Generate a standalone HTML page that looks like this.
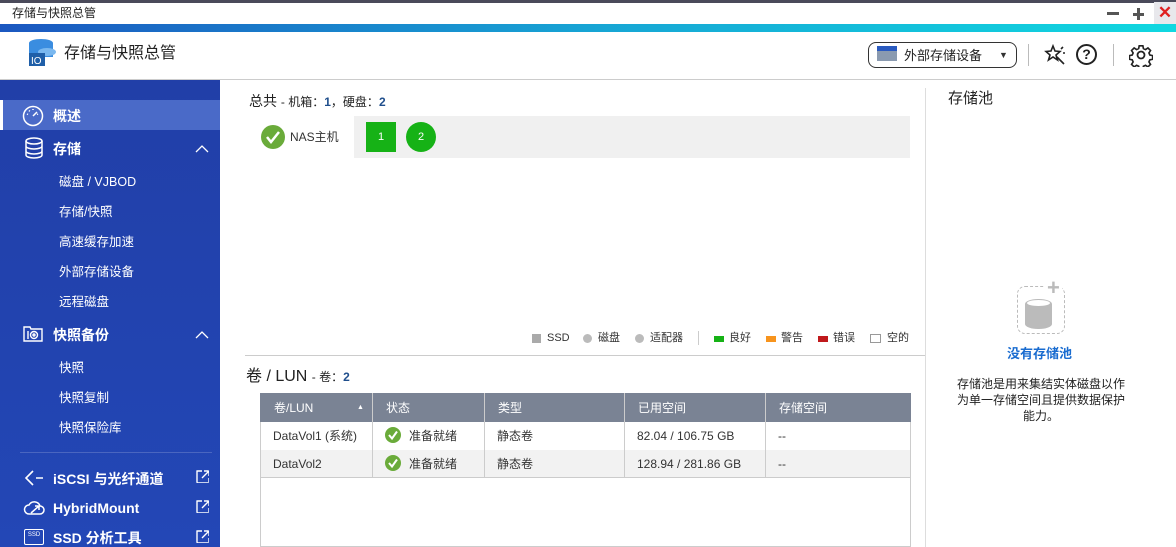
<html><head><style>
*{margin:0;padding:0;box-sizing:border-box}
body{width:1176px;height:547px;overflow:hidden;font-family:"Liberation Sans","Noto Sans CJK SC",sans-serif;background:#fff;position:relative;font-size:12px;color:#333;line-height:1.2}
.a{position:absolute;white-space:nowrap}
.sb{left:0;top:80px;width:220px;height:467px;background:linear-gradient(#213fa8,#2347b6);color:#fff}
.sb .it{position:absolute;font-size:14px;font-weight:bold;line-height:16px}
.sb .sub{position:absolute;left:59px;font-size:12.5px;line-height:14px}
.hd{background:#7a8394;color:#fff}
.lg{position:absolute;top:332px;font-size:11px;line-height:13px;color:#333}
.ck{position:absolute;width:16px;height:16px;border-radius:50%;background:#6aab3a}
.ext{position:absolute;left:196px;width:13px;height:13px;border:1.5px solid #fff;border-radius:1px}
</style></head><body>
<div class="a" style="left:0;top:0;width:1176px;height:3px;background:#4a4a5a"></div>
<div class="a" style="left:12px;top:6px;font-size:12px;color:#222;line-height:14px">存储与快照总管</div>
<div class="a" style="left:1107px;top:12px;width:12px;height:3px;background:#555"></div>
<div class="a" style="left:1133px;top:13px;width:11px;height:3px;background:#555"></div>
<div class="a" style="left:1137px;top:8px;width:3px;height:12px;background:#555"></div>
<div class="a" style="left:1154px;top:2px;width:22px;height:22px;background:#e8e8ec;color:#e02020;font-size:17px;text-align:center;font-weight:bold;line-height:22px">✕</div>
<div class="a" style="left:0;top:24px;width:1176px;height:8px;background:linear-gradient(90deg,#1b57c0,#17a4d4 50%,#10d8e0)"></div>
<svg class="a" style="left:27px;top:38px" width="32" height="30"><ellipse cx="14" cy="5" rx="12" ry="4" fill="#3a8de0"/><rect x="2" y="5" width="24" height="14" fill="#3a8de0"/><ellipse cx="20" cy="14" rx="9" ry="4" fill="#7ab8ef"/><rect x="2" y="15" width="16" height="13" fill="#1f5fa8"/><text x="4" y="26" font-size="10" fill="#fff" font-family="Liberation Sans">IO</text></svg>
<div class="a" style="left:64px;top:44px;font-size:16px;color:#222;line-height:20px">存储与快照总管</div>
<div class="a" style="left:868px;top:42px;width:149px;height:26px;border:1.5px solid #333;border-radius:8px"></div>
<div class="a" style="left:877px;top:46px;width:20px;height:15px;background:#8a9ab0;border-top:5px solid #2a5ac0"></div>
<div class="a" style="left:904px;top:48px;font-size:13px;color:#222;line-height:16px">外部存储设备</div>
<div class="a" style="left:999px;top:50px;font-size:9px;color:#333">▼</div>
<div class="a" style="left:1028px;top:44px;width:1px;height:22px;background:#bbb"></div>
<svg class="a" style="left:1044px;top:44px" width="22" height="22" fill="none" stroke="#222" stroke-width="1.6"><path d="M9 2l2 5 5 .5-4 3.5 1.5 5-4.5-3-4.5 3 1.5-5-4-3.5 5-.5z"/><path d="M13 13l7 7M17 5l2-2M19 9h2"/></svg>
<div class="a" style="left:1076px;top:44px;width:21px;height:21px;border:2px solid #222;border-radius:50%;text-align:center;font-weight:bold;font-size:14px;line-height:17px;color:#222">?</div>
<div class="a" style="left:1113px;top:44px;width:1px;height:22px;background:#bbb"></div>
<svg class="a" style="left:1129px;top:43px" width="24" height="24" fill="none" stroke="#222" stroke-width="1.8"><circle cx="12" cy="12" r="3.5"/><path d="M10 2h4l.6 3 2.3 1 2.6-1.7 2.8 2.8-1.7 2.6 1 2.3 3 .6v4l-3 .6-1 2.3 1.7 2.6-2.8 2.8-2.6-1.7-2.3 1-.6 3h-4l-.6-3-2.3-1-2.6 1.7-2.8-2.8 1.7-2.6-1-2.3-3-.6v-4l3-.6 1-2.3-1.7-2.6 2.8-2.8 2.6 1.7 2.3-1z" transform="translate(1 1) scale(.92)"/></svg>
<div class="a" style="left:0;top:79px;width:1176px;height:1px;background:#ccc"></div>
<div class="a sb">
<div class="a" style="left:0;top:20px;width:220px;height:30px;background:#4a6ac8"></div>
<div class="a" style="left:0;top:20px;width:3px;height:30px;background:#fff"></div>
<div class="it" style="top:28px;left:53px">概述</div>
<svg class="a" style="left:22px;top:25px" width="22" height="22" fill="none" stroke="#fff" stroke-width="1.5"><circle cx="11" cy="11" r="9.5"/><path d="M11 11l4-4M5 9l1 .5M7 5.5l.8.8M11 4v1M16 9l-1 .5"/></svg>
<div class="it" style="top:61px;left:53px">存储</div>
<svg class="a" style="left:24px;top:57px" width="20" height="22" fill="none" stroke="#fff" stroke-width="1.5"><ellipse cx="10" cy="4" rx="8" ry="3"/><path d="M2 4v14c0 1.7 3.6 3 8 3s8-1.3 8-3V4M2 9c0 1.7 3.6 3 8 3s8-1.3 8-3M2 14c0 1.7 3.6 3 8 3s8-1.3 8-3"/></svg>
<svg class="a" style="left:195px;top:64px" width="14" height="9" fill="none" stroke="#fff" stroke-width="1.3"><path d="M1 8l6-6 6 6"/></svg>
<div class="sub" style="top:95px">磁盘 / VJBOD</div>
<div class="sub" style="top:125px">存储/快照</div>
<div class="sub" style="top:155px">高速缓存加速</div>
<div class="sub" style="top:185px">外部存储设备</div>
<div class="sub" style="top:215px">远程磁盘</div>
<svg class="a" style="left:23px;top:246px" width="20" height="16" fill="none" stroke="#fff" stroke-width="1.4"><path d="M1 1h6l1 2h11v12H1z"/><circle cx="11" cy="9" r="3.5"/><circle cx="11" cy="9" r="1"/><path d="M5 5v8"/></svg>
<div class="it" style="top:247px;left:53px">快照备份</div>
<svg class="a" style="left:195px;top:250px" width="14" height="9" fill="none" stroke="#fff" stroke-width="1.3"><path d="M1 8l6-6 6 6"/></svg>
<div class="sub" style="top:281px">快照</div>
<div class="sub" style="top:311px">快照复制</div>
<div class="sub" style="top:341px">快照保险库</div>
<div class="a" style="left:20px;top:372px;width:192px;height:1px;background:#4a66c0"></div>
<div class="it" style="top:391px;left:53px">iSCSI 与光纤通道</div>
<div class="it" style="top:420px;left:53px">HybridMount</div>
<div class="it" style="top:450px;left:53px">SSD 分析工具</div>
<svg class="a" style="left:24px;top:390px" width="20" height="16" fill="none" stroke="#fff" stroke-width="1.6"><path d="M9 1L2 8l7 7M12 8h7"/></svg>
<svg class="a" style="left:23px;top:420px" width="22" height="16" fill="none" stroke="#fff" stroke-width="1.5"><path d="M6 14h11a4 4 0 000-8 6 6 0 00-11-1 4.5 4.5 0 000 9z"/><path d="M8 13l8-7M12 6h4v4"/></svg>
<div class="a" style="left:24px;top:449px;width:20px;height:16px;border:1.5px solid #fff;border-radius:2px;font-size:6px;text-align:center;line-height:11px">SSD</div>
<svg class="ext" style="top:390px;border:none" width="14" height="14" fill="none" stroke="#fff" stroke-width="1.4"><path d="M6 1H1v12h12V8M8 1h5v5M13 1L6 8"/></svg>
<svg class="ext" style="top:420px;border:none" width="14" height="14" fill="none" stroke="#fff" stroke-width="1.4"><path d="M6 1H1v12h12V8M8 1h5v5M13 1L6 8"/></svg>
<svg class="ext" style="top:450px;border:none" width="14" height="14" fill="none" stroke="#fff" stroke-width="1.4"><path d="M6 1H1v12h12V8M8 1h5v5M13 1L6 8"/></svg>
</div>
<div class="a" style="left:249px;top:92px;font-size:14px;color:#222;line-height:18px">总共 <span style="font-size:12px">- 机箱：<b style="color:#1f4e8c">1</b>，硬盘：<b style="color:#1f4e8c">2</b></span></div>
<svg class="a" style="left:261px;top:125px" width="24" height="24"><circle cx="12" cy="12" r="12" fill="#6aab3a"/><path d="M6 12l4 5 8-10" fill="none" stroke="#fff" stroke-width="2.5"/></svg>
<div class="a" style="left:290px;top:130px;font-size:12px;line-height:14px">NAS主机</div>
<div class="a" style="left:354px;top:116px;width:556px;height:42px;background:#f0f0f0"></div>
<div class="a" style="left:366px;top:122px;width:30px;height:30px;background:#16b216;color:#fff;text-align:center;line-height:30px;font-size:11px">1</div>
<div class="a" style="left:406px;top:122px;width:30px;height:30px;border-radius:50%;background:#16b216;color:#fff;text-align:center;line-height:30px;font-size:11px">2</div>
<div class="a" style="left:532px;top:334px;width:9px;height:9px;background:#aaa"></div><div class="lg" style="left:547px">SSD</div>
<div class="a" style="left:583px;top:334px;width:9px;height:9px;border-radius:50%;background:#bbb"></div><div class="lg" style="left:598px">磁盘</div>
<div class="a" style="left:635px;top:334px;width:9px;height:9px;border-radius:50%;background:#bbb"></div><div class="lg" style="left:650px">适配器</div>
<div class="a" style="left:698px;top:331px;width:1px;height:14px;background:#ccc"></div>
<div class="a" style="left:714px;top:336px;width:10px;height:6px;background:#16b216"></div><div class="lg" style="left:729px">良好</div>
<div class="a" style="left:766px;top:336px;width:10px;height:6px;background:#f7941d"></div><div class="lg" style="left:781px">警告</div>
<div class="a" style="left:818px;top:336px;width:10px;height:6px;background:#c0191c"></div><div class="lg" style="left:833px">错误</div>
<div class="a" style="left:870px;top:334px;width:11px;height:9px;border:1px solid #999"></div><div class="lg" style="left:887px">空的</div>
<div class="a" style="left:245px;top:355px;width:680px;height:1px;background:#ccc"></div>
<div class="a" style="left:925px;top:88px;width:1px;height:459px;background:#ddd"></div>
<div class="a" style="left:246px;top:367px;font-size:16px;color:#222;line-height:20px">卷 / LUN <span style="font-size:12px">- 卷：<b style="color:#1f4e8c">2</b></span></div>
<div class="a" style="left:260px;top:393px;width:651px;height:154px;border:1px solid #ccc;border-top:none"></div>
<div class="a hd" style="left:260px;top:393px;width:651px;height:29px"></div>
<div class="a" style="left:261px;top:450px;width:649px;height:28px;background:#f2f2f2;border-bottom:1px solid #ccc"></div>
<div class="a" style="left:372px;top:393px;width:1px;height:85px;background:#ccc"></div>
<div class="a" style="left:484px;top:393px;width:1px;height:85px;background:#ccc"></div>
<div class="a" style="left:624px;top:393px;width:1px;height:85px;background:#ccc"></div>
<div class="a" style="left:765px;top:393px;width:1px;height:85px;background:#ccc"></div>
<div class="a" style="top:401px;left:274px;color:#fff;line-height:14px">卷/LUN</div><div class="a" style="top:404px;left:357px;color:#fff;font-size:7px">▲</div>
<div class="a" style="top:401px;left:386px;color:#fff;line-height:14px">状态</div>
<div class="a" style="top:401px;left:498px;color:#fff;line-height:14px">类型</div>
<div class="a" style="top:401px;left:638px;color:#fff;line-height:14px">已用空间</div>
<div class="a" style="top:401px;left:779px;color:#fff;line-height:14px">存储空间</div>
<div class="a" style="top:429px;left:273px;line-height:14px">DataVol1 (系统)</div>
<div class="a" style="top:457px;left:273px;line-height:14px">DataVol2</div>
<svg class="a" style="top:427px;left:385px" width="16" height="16"><circle cx="8" cy="8" r="8" fill="#6aab3a"/><path d="M4 8l3 3.5 5-7" fill="none" stroke="#fff" stroke-width="2"/></svg>
<svg class="a" style="top:455px;left:385px" width="16" height="16"><circle cx="8" cy="8" r="8" fill="#6aab3a"/><path d="M4 8l3 3.5 5-7" fill="none" stroke="#fff" stroke-width="2"/></svg>
<div class="a" style="top:429px;left:409px;line-height:14px">准备就绪</div><div class="a" style="top:457px;left:409px;line-height:14px">准备就绪</div>
<div class="a" style="top:429px;left:497px;line-height:14px">静态卷</div><div class="a" style="top:457px;left:497px;line-height:14px">静态卷</div>
<div class="a" style="top:429px;left:637px;line-height:14px">82.04 / 106.75 GB</div><div class="a" style="top:457px;left:637px;line-height:14px">128.94 / 281.86 GB</div>
<div class="a" style="top:429px;left:778px;line-height:14px">--</div><div class="a" style="top:457px;left:778px;line-height:14px">--</div>
<div class="a" style="left:948px;top:90px;font-size:15px;color:#222;line-height:18px">存储池</div>
<div class="a" style="left:1017px;top:286px;width:48px;height:48px;border:1.5px dashed #bbb;border-radius:8px"></div>
<div class="a" style="left:1025px;top:299px;width:27px;height:30px;background:#bbb;border-radius:13px/5px"></div>
<div class="a" style="left:1027px;top:300px;width:23px;height:6px;background:#fff;border-radius:50%"></div>
<div class="a" style="left:1045px;top:277px;font-size:22px;font-weight:bold;color:#bbb;background:#fff;line-height:22px;padding:0 2px">+</div>
<div class="a" style="left:1007px;top:346px;font-size:13px;font-weight:bold;color:#1a6cd0;line-height:16px">没有存储池</div>
<div class="a" style="left:955px;top:376px;width:172px;text-align:center;font-size:12px;line-height:16px;color:#222;white-space:normal">存储池是用来集结实体磁盘以作为单一存储空间且提供数据保护能力。</div>
</body></html>
